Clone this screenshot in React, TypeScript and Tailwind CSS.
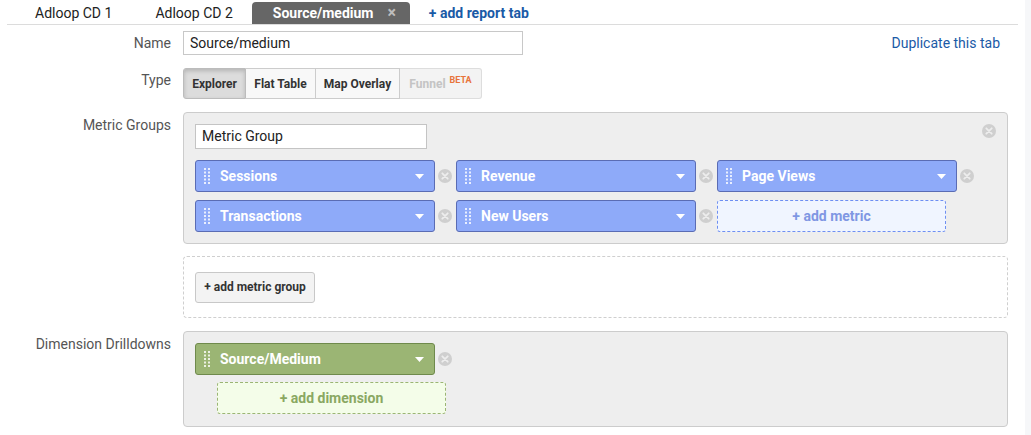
import { ReactNode } from "react"

function CloseDot({ className = "" }: { className?: string }) {
  return (
    <svg width="16" height="16" viewBox="0 0 16 16" className={className}>
      <circle cx="8" cy="8" r="7" fill="#cfcfcf" />
      <path d="M5.3 5.3 L10.7 10.7 M10.7 5.3 L5.3 10.7" stroke="#ededed" strokeWidth="1.8" strokeLinecap="round" />
    </svg>
  )
}

function Handle() {
  return (
    <svg width="6" height="16" viewBox="0 0 6 16" className="shrink-0">
      {[1, 4.5, 8, 11.5, 15].map((y) => (
        <g key={y}>
          <rect x="0" y={y - 1} width="2" height="2" fill="#ffffff" opacity="0.8" />
          <rect x="4" y={y - 1} width="2" height="2" fill="#ffffff" opacity="0.8" />
        </g>
      ))}
    </svg>
  )
}

function Pill({ label, green = false }: { label: string; green?: boolean }) {
  return (
    <div className="flex items-center">
      <div
        className={
          green
            ? "w-[240px] h-[32px] rounded-[3px] border border-[#6f8a4c] bg-[#9bb574] flex items-center pl-[8px] pr-[10px]"
            : "w-[240px] h-[32px] rounded-[3px] border border-[#5a6cb4] bg-[#8eaaf9] flex items-center pl-[8px] pr-[10px]"
        }
      >
        <Handle />
        <span className="ml-[10px] flex-1 text-[14px] font-bold text-white">{label}</span>
        <svg width="9" height="5" viewBox="0 0 9 5">
          <path d="M0 0 L9 0 L4.5 5 Z" fill="#ffffff" />
        </svg>
      </div>
      <CloseDot className="ml-[2px] mr-[3px]" />
    </div>
  )
}

function Row({ label, children, labelClass = "pt-[6px]" }: { label: string; children: ReactNode; labelClass?: string }) {
  return (
    <div className="flex">
      <div className={"w-[171px] shrink-0 text-right text-[14px] text-[#555] " + labelClass}>{label}</div>
      <div className="ml-[12px] flex-1">{children}</div>
    </div>
  )
}

export default function App() {
  return (
    <div className="flex w-[1031px] h-[435px] overflow-hidden bg-white font-['Roboto',sans-serif]">
      <div className="w-[1025px] shrink-0">
        {/* tabs */}
        <div className="mx-[7px] h-[25px] border-b border-[#dcdcdc] flex items-end text-[14px]">
          <div className="w-[28px]" />
          <div className="h-[22px] flex items-center text-[#222]">Adloop CD 1</div>
          <div className="h-[22px] ml-[43px] flex items-center text-[#222]">Adloop CD 2</div>
          <div className="ml-[19px] h-[22px] w-[158px] rounded-t-[4px] bg-[#666666] flex items-center pl-[21px] text-white font-bold">
            Source/medium
            <span className="ml-[14px] text-[#bdbdbd] text-[16px] font-bold leading-none">×</span>
          </div>
          <div className="ml-[19px] h-[22px] flex items-center font-bold text-[#1a5aa6]">+ add report tab</div>
        </div>

        <div className="mt-[6px] flex flex-col">
          {/* Name */}
          <Row label="Name" labelClass="pt-[2px]">
            <div className="flex items-start justify-between">
              <div className="w-[340px] h-[24px] border border-[#c8c8c8] px-[6px] flex items-center text-[14px] text-[#222]">Source/medium</div>
              <div className="mr-[25px] pt-[2px] text-[14px] text-[#1a5aa6]">Duplicate this tab</div>
            </div>
          </Row>

          {/* Type */}
          <div className="mt-[13px]">
            <Row label="Type" labelClass="pt-[2px]">
              <div className="flex h-[31px] text-[12px] font-bold">
                <div className="w-[63px] flex items-center justify-center border border-[#bcbcbc] rounded-l-[3px] bg-[#dcdcdc] shadow-[inset_0_2px_4px_rgba(0,0,0,0.18)] text-[#333]">Explorer</div>
                <div className="w-[70px] flex items-center justify-center border-y border-r border-[#cccccc] bg-[#f8f8f8] text-[#333]">Flat Table</div>
                <div className="w-[84px] flex items-center justify-center border-y border-r border-[#cccccc] bg-[#f8f8f8] text-[#333]">Map Overlay</div>
                <div className="w-[82px] flex items-center justify-center border-y border-r border-[#dddddd] rounded-r-[3px] bg-[#f3f3f3] text-[#c4c4c4]">
                  Funnel<sup className="ml-[4px] text-[9px] text-[#e8743b] -top-[4px]">BETA</sup>
                </div>
              </div>
            </Row>
          </div>

          {/* Metric groups */}
          <div className="mt-[13px]">
            <Row label="Metric Groups" labelClass="pt-[3px]">
              <div className="w-[825px] rounded-[4px] border border-[#cccccc] bg-[#eeeeee] p-[11px] relative">
                <CloseDot className="absolute right-[10px] top-[10px]" />
                <div className="w-[232px] h-[25px] border border-[#c4c4c4] bg-white px-[6px] flex items-center text-[14px] text-[#222]">Metric Group</div>
                <div className="mt-[11px] flex flex-col gap-[8px]">
                  <div className="flex">
                    <Pill label="Sessions" />
                    <Pill label="Revenue" />
                    <Pill label="Page Views" />
                  </div>
                  <div className="flex">
                    <Pill label="Transactions" />
                    <Pill label="New Users" />
                    <div className="w-[229px] h-[32px] rounded-[3px] border border-dashed border-[#6e8ff2] bg-[#f0f5ff] flex items-center justify-center text-[14px] font-bold text-[#7f97e3]">
                      + add metric
                    </div>
                  </div>
                </div>
              </div>
            </Row>
          </div>

          {/* add metric group */}
          <div className="mt-[12px]">
            <Row label="">
              <div className="w-[825px] h-[62px] rounded-[4px] border border-dashed border-[#cfcfcf] flex items-center px-[11px]">
                <div className="w-[120px] h-[31px] rounded-[3px] border border-[#c8c8c8] bg-[#f3f3f3] flex items-center justify-center text-[12px] font-bold text-[#333]">
                  + add metric group
                </div>
              </div>
            </Row>
          </div>

          {/* dimensions */}
          <div className="mt-[13px]">
            <Row label="Dimension Drilldowns" labelClass="pt-[3px]">
              <div className="w-[825px] h-[96px] rounded-[4px] border border-[#cccccc] bg-[#eeeeee] p-[11px]">
                <Pill label="Source/Medium" green />
                <div className="ml-[22px] mt-[7px] w-[229px] h-[32px] rounded-[3px] border border-dashed border-[#9bb574] bg-[#f4fde9] flex items-center justify-center text-[14px] font-bold text-[#8aa862]">
                  + add dimension
                </div>
              </div>
            </Row>
          </div>
        </div>
      </div>
      <div className="flex-1 bg-[#f6f7f9]" />
    </div>
  )
}
